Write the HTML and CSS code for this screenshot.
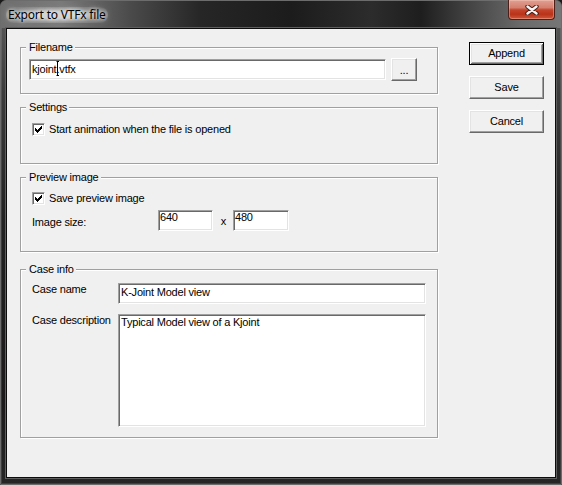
FILE: index.html
```html
<!DOCTYPE html>
<html>
<head>
<meta charset="utf-8">
<title>Export to VTFx file</title>
<link rel="stylesheet" href="styles.css">
</head>
<body>
<div class="window">
  <div class="titlebar">
    <span class="title">Export to VTFx file</span>
    <div class="close">
      <svg width="14" height="10" viewBox="0 0 14 10">
        <path d="M2.5 1.5 L11.5 8.5 M11.5 1.5 L2.5 8.5" stroke="#4a1c14" stroke-width="4.4" stroke-linecap="round" fill="none"/>
        <path d="M2.5 1.5 L11.5 8.5 M11.5 1.5 L2.5 8.5" stroke="#f4f4f4" stroke-width="2.4" stroke-linecap="round" fill="none"/>
      </svg>
    </div>
  </div>
  <div class="client">
    <div class="main">
      <fieldset class="group g-file">
        <legend>Filename</legend>
        <div class="file-row">
          <div class="edit file">kjoint<svg class="ibeam" width="4" height="15" viewBox="0 0 4 15"><path d="M0.5 0.5 H3 M1.5 0.5 V14.5 M0.5 14.5 H3" stroke="#000" stroke-width="1" fill="none"/></svg>.vtfx</div>
          <div class="btn browse">...</div>
        </div>
      </fieldset>
      <fieldset class="group g-settings">
        <legend>Settings</legend>
        <div class="check">
          <span class="box"><svg width="9" height="9" viewBox="0 0 9 9"><polygon points="1,3 2,3 2,4 3,4 3,5 4,5 4,4 5,4 5,3 6,3 6,2 7,2 7,1 8,1 8,4 7,4 7,5 6,5 6,6 5,6 5,7 4,7 4,8 3,8 3,7 2,7 2,6 1,6" fill="#000" shape-rendering="crispEdges"/></svg></span>
          <span class="check-text">Start animation when the file is opened</span>
        </div>
      </fieldset>
      <fieldset class="group g-preview">
        <legend>Preview image</legend>
        <div class="check">
          <span class="box"><svg width="9" height="9" viewBox="0 0 9 9"><polygon points="1,3 2,3 2,4 3,4 3,5 4,5 4,4 5,4 5,3 6,3 6,2 7,2 7,1 8,1 8,4 7,4 7,5 6,5 6,6 5,6 5,7 4,7 4,8 3,8 3,7 2,7 2,6 1,6" fill="#000" shape-rendering="crispEdges"/></svg></span>
          <span class="check-text">Save preview image</span>
        </div>
        <div class="size-row">
          <span class="size-label">Image size:</span>
          <div class="edit num w640">640</div>
          <span class="times">x</span>
          <div class="edit num w480">480</div>
        </div>
      </fieldset>
      <fieldset class="group g-case">
        <legend>Case info</legend>
        <div class="field">
          <span class="flabel">Case name</span>
          <div class="edit case-name">K-Joint Model view</div>
        </div>
        <div class="field field-desc">
          <span class="flabel">Case description</span>
          <div class="edit case-desc">Typical Model view of a Kjoint</div>
        </div>
      </fieldset>
    </div>
    <div class="actions">
      <div class="btn default">Append</div>
      <div class="btn">Save</div>
      <div class="btn">Cancel</div>
    </div>
  </div>
</div>
</body>
</html>
```
FILE: styles.css
```css
html, body {
  margin: 0;
  padding: 0;
}
body {
  width: 562px;
  height: 485px;
  overflow: hidden;
  background: #1a1a1a;
  font-family: "Liberation Sans", Arial, sans-serif;
  font-size: 11px;
  letter-spacing: -0.2px;
  color: #000;
}
.window {
  box-sizing: border-box;
  width: 562px;
  height: 485px;
  display: flex;
  flex-direction: column;
  border: 1px solid #6c6c6c;
  border-radius: 6px 6px 0 0;
  background: linear-gradient(to bottom, #5e5e5e 0, #3c3c3c 90px, #222 220px, #1c1a1a 400px, #262626 100%);
  box-shadow: inset 0 0 0 1px rgba(255,255,255,0.12);
}
.titlebar {
  height: 27px;
  flex: none;
  display: flex;
  justify-content: space-between;
  align-items: flex-start;
  border-radius: 5px 5px 0 0;
  background: linear-gradient(to right, #6e6e6e 0, #7a7a7a 60px, #4a4a4a 130px, #262626 200px, #1c1c1c 290px, #2c2c2c 370px, #1e1e1e 420px, #454545 470px, #6a6a6a 520px, #767676 100%);
}
.title {
  font-family: "Noto Sans", "Open Sans", sans-serif;
  font-size: 12px;
  line-height: 16px;
  letter-spacing: -0.2px;
  margin: 6px 0 0 5px;
  padding: 0 2px;
  color: #000;
  border-radius: 8px;
  background: radial-gradient(ellipse at center, rgba(230,230,230,0.75) 30%, rgba(200,200,200,0.35) 65%, rgba(160,160,160,0) 100%);
  text-shadow: 0 0 4px rgba(255,255,255,0.9), 0 0 8px rgba(255,255,255,0.6);
}
.close {
  box-sizing: border-box;
  width: 47px;
  height: 20px;
  margin: -1px 6px 0 0;
  display: flex;
  align-items: center;
  justify-content: center;
  border: 1px solid #4c1f18;
  border-top: none;
  border-radius: 0 0 4px 4px;
  background: linear-gradient(to bottom, #e0a093 0, #d4806e 40%, #c4452c 52%, #b93319 75%, #d1573c 100%);
  box-shadow: inset 0 0 0 1px rgba(255,220,210,0.35);
}
.client {
  box-sizing: border-box;
  width: 550px;
  height: 450px;
  margin: 0 0 0 5px;
  display: flex;
  align-items: flex-start;
  padding: 12px 0 0 13px;
  background: #f0f0f0;
  border: 1px solid #0c0c0c;
  box-shadow: 0 0 0 1px #5e5e5e;
}
.main {
  width: 418px;
  display: flex;
  flex-direction: column;
}
.group {
  margin: 0;
  padding: 0;
  min-width: 0;
  border: 1px solid #a0a0a0;
  box-shadow: inset 1px 1px 0 #fff, 1px 1px 0 #fff;
}
.group legend {
  margin-left: -6px;
  padding: 0 2px 0 3px;
  line-height: 13px;
  background: #f0f0f0;
}
.g-file {
  padding: 4px 0 12px 8px;
}
.g-file legend {
  margin-left: -3px;
}
.g-settings {
  margin-top: 7px;
  padding: 9px 0 27px 11px;
}
.g-preview {
  margin-top: 7px;
  padding: 8px 0 20px 11px;
}
.g-case {
  margin-top: 11px;
  padding: 7px 0 10px 11px;
}
.file-row {
  display: flex;
  align-items: center;
  height: 23px;
}
.edit {
  box-sizing: border-box;
  background: #fff;
  border: 1px solid;
  border-color: #a0a0a0 #fff #fff #a0a0a0;
  box-shadow: inset 1px 1px 0 #696969, inset -1px -1px 0 #e3e3e3;
  padding: 0 2px;
  line-height: 13px;
  white-space: nowrap;
  overflow: hidden;
}
.file {
  width: 357px;
  height: 21px;
  padding-top: 1px;
}
.ibeam {
  display: inline-block;
  vertical-align: -3px;
  margin-right: -4px;
}
.btn {
  box-sizing: border-box;
  height: 23px;
  display: flex;
  align-items: center;
  justify-content: center;
  background: #f0f0f0;
  border: 1px solid;
  border-color: #fff #696969 #696969 #fff;
  box-shadow: inset -1px -1px 0 #a0a0a0, inset 1px 1px 0 #e3e3e3;
  line-height: 13px;
}
.btn.default {
  border: 1px solid #000;
  box-shadow: inset 1px 1px 0 #fff, inset -1px -1px 0 #696969, inset 2px 2px 0 #e3e3e3, inset -2px -2px 0 #a0a0a0;
}
.browse {
  width: 26px;
  margin-left: 5px;
  padding-top: 2px;
}
.check {
  display: flex;
  align-items: flex-start;
  height: 13px;
}
.box {
  box-sizing: border-box;
  width: 13px;
  height: 13px;
  flex: none;
  display: flex;
  align-items: center;
  justify-content: center;
  background: #fff;
  border: 1px solid;
  border-color: #a0a0a0 #fff #fff #a0a0a0;
  box-shadow: inset 1px 1px 0 #696969, inset -1px -1px 0 #e3e3e3;
}
.check-text {
  margin-left: 4px;
  line-height: 13px;
}
.size-row {
  display: flex;
  align-items: flex-start;
  margin-top: 5px;
  height: 21px;
}
.size-label {
  width: 126px;
  margin-top: 6px;
  line-height: 13px;
}
.num {
  height: 21px;
  line-height: 11px;
  padding: 1px 1px 0 1px;
}
.w640 {
  width: 55px;
}
.w480 {
  width: 56px;
}
.times {
  width: 20px;
  padding-left: 1px;
  box-sizing: border-box;
  text-align: center;
  margin-top: 5px;
  line-height: 13px;
}
.field {
  display: flex;
  align-items: flex-start;
}
.field-desc {
  margin-top: 10px;
}
.flabel {
  width: 86px;
  line-height: 13px;
}
.case-name {
  width: 308px;
  height: 21px;
  padding-top: 2px;
}
.case-desc {
  width: 308px;
  height: 113px;
  padding-top: 1px;
}
.actions {
  width: 75px;
  margin-left: 31px;
  padding-top: 1px;
  display: flex;
  flex-direction: column;
  gap: 11px;
}
```
